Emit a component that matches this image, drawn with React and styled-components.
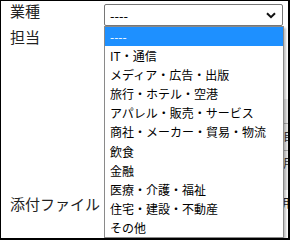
import React from "react";
import styled, { createGlobalStyle } from "styled-components";

const GlobalStyle = createGlobalStyle`
  html, body {
    margin: 0;
    padding: 0;
    background: #fff;
  }
  body {
    font-family: "Noto Sans CJK JP", "Noto Sans", sans-serif;
    color: #222;
  }
`;

const options = [
  "----",
  "IT・通信",
  "メディア・広告・出版",
  "旅行・ホテル・空港",
  "アパレル・販売・サービス",
  "商社・メーカー・貿易・物流",
  "飲食",
  "金融",
  "医療・介護・福祉",
  "住宅・建設・不動産",
  "その他",
];

const App = () => {
  return (
    <>
      <GlobalStyle />
      <Frame>
        <Form>
          <Row>
            <Label>業種</Label>
            <SelectBox>
              <SelectText>----</SelectText>
              <svg width="10" height="7" viewBox="0 0 10 7">
                <path d="M1 1.2 L5 5.2 L9 1.2" fill="none" stroke="#111" strokeWidth="2" />
              </svg>
            </SelectBox>
          </Row>
          <Row>
            <Label shift={1}>担当</Label>
            <Side>
              <SideCell tall>自</SideCell>
              <SideCell>用</SideCell>
            </Side>
          </Row>
          <Row>
            <Label shift={4}>添付ファイル</Label>
            <FileField>用</FileField>
          </Row>
        </Form>
        <ListBox>
          {options.map((o, i) => (
            <Option key={i} selected={i === 0}>{o}</Option>
          ))}
        </ListBox>
      </Frame>
    </>
  );
};

const Frame = styled.div`
  position: relative;
  width: 290px;
  height: 240px;
  box-sizing: border-box;
  border-top: 1px solid #000;
  border-left: 1px solid #000;
  border-right: 2px solid #000;
  border-bottom: 2px solid #000;
  overflow: hidden;
  background: #fff;
`;

const Form = styled.div`
  display: flex;
  flex-direction: column;
  padding: 0 0 0 9px;
`;

const Row = styled.div`
  display: grid;
  grid-template-columns: 94px 184px;
  align-items: start;
`;

const Label = styled.div`
  font-size: 15px;
  line-height: 20px;
  margin-top: ${(p) => p.shift || 0}px;
  color: #222;
`;

const SelectBox = styled.div`
  width: 179px;
  height: 22px;
  margin-top: 3px;
  box-sizing: border-box;
  border: 1px solid #767676;
  border-radius: 2px;
  display: flex;
  align-items: center;
  justify-content: space-between;
  padding: 0 6px 0 5px;
  background: #fff;
`;

const SelectText = styled.span`
  font-size: 13px;
  color: #000;
`;

const Side = styled.div`
  display: flex;
  flex-direction: column;
  margin-top: 73px;
  height: 91px;
  border-left: 1px solid #b5b5b5;
  background: #e9e9e9;
`;

const SideCell = styled.div`
  height: ${(p) => (p.tall ? "26px" : "24px")};
  margin-top: ${(p) => (p.tall ? "24px" : "0")};
  border-top: 1px solid #aaa;
  padding-left: 178px;
  font-size: 12px;
  line-height: 24px;
  color: #333;
`;

const FileField = styled.div`
  margin-top: 4px;
  padding-left: 178px;
  font-size: 12px;
  line-height: 18px;
  color: #222;
`;

const ListBox = styled.div`
  position: absolute;
  left: 103px;
  top: 25px;
  width: 180px;
  box-sizing: border-box;
  border: 1px solid #8a8a8a;
  background: #fff;
  box-shadow: 2px 2px 2px rgba(0, 0, 0, 0.25);
  display: flex;
  flex-direction: column;
`;

const Option = styled.div`
  height: 19.1px;
  line-height: 19px;
  padding-left: 5px;
  font-size: 12px;
  white-space: nowrap;
  color: ${(p) => (p.selected ? "#fff" : "#000")};
  background: ${(p) => (p.selected ? "#1e90ff" : "#fff")};
`;

export default App;
